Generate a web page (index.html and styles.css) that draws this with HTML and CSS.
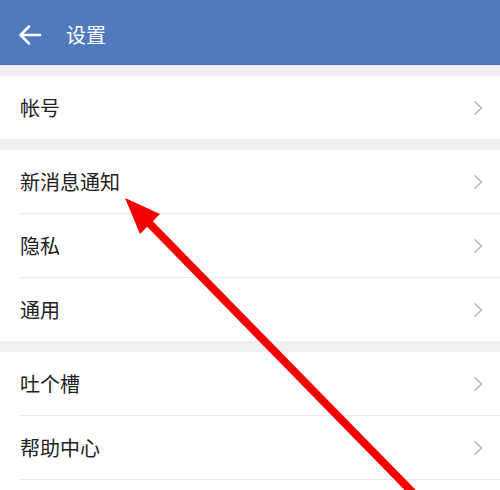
FILE: index.html
```html
<!DOCTYPE html>
<html lang="zh">
<head>
<meta charset="utf-8">
<link rel="stylesheet" href="styles.css">
</head>
<body>
<div class="screen">
  <header class="topbar">
    <svg class="back" width="24" height="22" viewBox="0 0 24 22"><path d="M22 11H3M11 2.5L2.5 11L11 19.5" fill="none" stroke="#fff" stroke-width="2.6" stroke-linecap="round" stroke-linejoin="round"/></svg>
    <span class="title">设置</span>
  </header>
  <div class="group">
    <div class="item"><span class="label">帐号</span><svg class="chev" width="10" height="16" viewBox="0 0 10 16"><path d="M1.5 1.5L8.5 8L1.5 14.5" fill="none" stroke="#b5b5b5" stroke-width="1.5"/></svg></div>
  </div>
  <div class="group">
    <div class="item"><span class="label">新消息通知</span><svg class="chev" width="10" height="16" viewBox="0 0 10 16"><path d="M1.5 1.5L8.5 8L1.5 14.5" fill="none" stroke="#b5b5b5" stroke-width="1.5"/></svg></div>
    <div class="item"><span class="label">隐私</span><svg class="chev" width="10" height="16" viewBox="0 0 10 16"><path d="M1.5 1.5L8.5 8L1.5 14.5" fill="none" stroke="#b5b5b5" stroke-width="1.5"/></svg></div>
    <div class="item"><span class="label">通用</span><svg class="chev" width="10" height="16" viewBox="0 0 10 16"><path d="M1.5 1.5L8.5 8L1.5 14.5" fill="none" stroke="#b5b5b5" stroke-width="1.5"/></svg></div>
  </div>
  <div class="group">
    <div class="item"><span class="label">吐个槽</span><svg class="chev" width="10" height="16" viewBox="0 0 10 16"><path d="M1.5 1.5L8.5 8L1.5 14.5" fill="none" stroke="#b5b5b5" stroke-width="1.5"/></svg></div>
    <div class="item"><span class="label">帮助中心</span><svg class="chev" width="10" height="16" viewBox="0 0 10 16"><path d="M1.5 1.5L8.5 8L1.5 14.5" fill="none" stroke="#b5b5b5" stroke-width="1.5"/></svg></div>
    <div class="item"></div>
  </div>
  <svg class="pointer" width="500" height="490" viewBox="0 0 500 490">
    <line x1="148" y1="222" x2="420" y2="500" stroke="#f40000" stroke-width="8"/>
    <polygon points="125,198 160,214 140,234" fill="#f40000"/>
  </svg>
</div>
</body>
</html>
```

FILE: styles.css
```css
* { box-sizing: border-box; }
html, body { margin: 0; padding: 0; }
body {
  width: 500px;
  height: 490px;
  overflow: hidden;
  background: #f0f0f2;
  font-family: "Noto Sans CJK SC", "Noto Sans", sans-serif;
}
.screen {
  position: relative;
  width: 500px;
  height: 490px;
  overflow: hidden;
}
.topbar {
  height: 65px;
  background: #5079be;
  border-bottom: 1px solid #4a6fae;
  display: flex;
  align-items: center;
  padding: 6px 0 0 18px;
}
.back { display: block; }
.title {
  color: #fff;
  font-size: 20px;
  margin-left: 24px;
  line-height: 1;
}
.group {
  background: #fff;
  margin-top: 11px;
  padding-left: 20px;
}
.item {
  height: 64px;
  display: flex;
  align-items: center;
  justify-content: space-between;
  padding-right: 17px;
  border-top: 1px solid #ebebeb;
}
.item:first-child { border-top: none; height: 63px; }
.label {
  font-size: 20px;
  color: #222;
  line-height: 1;
}
.chev { display: block; }
.pointer {
  position: absolute;
  left: 0;
  top: 0;
}
```
